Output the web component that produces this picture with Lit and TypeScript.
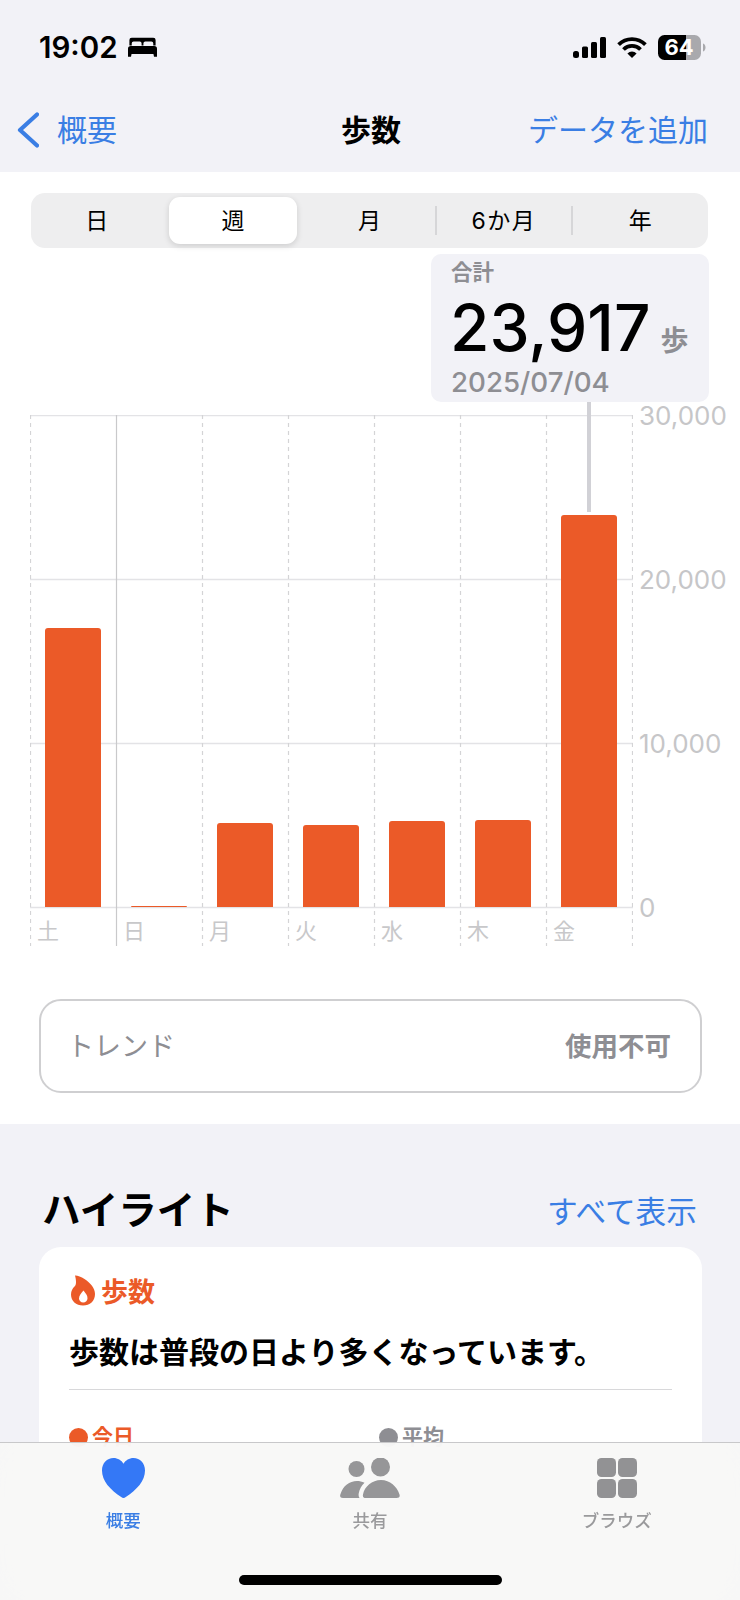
import { LitElement, html, css, svg } from 'lit';
import { customElement } from 'lit/decorators.js';

const MAX = 30000;
const PLOT_H = 492;
const COL_W = 86;

const days = [
  { label: '土', steps: 17000 },
  { label: '日', steps: 60 },
  { label: '月', steps: 5120 },
  { label: '火', steps: 5000 },
  { label: '水', steps: 5240 },
  { label: '木', steps: 5300 },
  { label: '金', steps: 23917 },
];

const ranges = ['日', '週', '月', '6か月', '年'];

@customElement('app-root')
export class AppRoot extends LitElement {
  static styles = css`
    :host {
      display: block;
      width: 740px;
      font-family: Inter, "Noto Sans CJK JP", sans-serif;
    }
    * { box-sizing: border-box; }
    .screen {
      position: relative;
      width: 740px;
      height: 1600px;
      overflow: hidden;
      background: #f2f2f7;
      color: #000;
    }
    .status {
      display: flex;
      align-items: center;
      height: 48px;
      margin-top: 23px;
      padding: 0 34px 0 39px;
    }
    .time {
      font-size: 29.5px;
      font-weight: 600;
      margin-right: 10px;
    }
    .status-right {
      margin-left: auto;
      display: flex;
      align-items: center;
      gap: 11px;
    }
    .nav {
      display: grid;
      grid-template-columns: 324px auto 1fr;
      align-items: center;
      height: 101px;
      padding: 17px 32px 0 17px;
      font-size: 30px;
      line-height: 40px;
    }
    .back {
      display: flex;
      align-items: center;
      gap: 18px;
      color: #3a7ee4;
    }
    .title { font-weight: 700; font-size: 30px; }
    .add { justify-self: end; color: #3a7ee4; }

    .sheet {
      position: relative;
      background: #fff;
      height: 952px;
      padding-top: 21px;
    }
    .segments {
      display: grid;
      grid-template-columns: repeat(5, 1fr);
      align-items: center;
      width: 677px;
      height: 55px;
      margin-left: 31px;
      padding: 4px 0;
      border-radius: 14px;
      background: #eeeeef;
      font-size: 23px;
    }
    .seg {
      position: relative;
      height: 47px;
      padding-bottom: 3px;
      display: flex;
      align-items: center;
      justify-content: center;
    }
    .seg.first { padding-right: 4px; }
    .seg.wide { letter-spacing: 1.5px; padding-right: 2px; }
    .seg.on {
      margin: 0 5px 0 3px;
      background: #fff;
      border-radius: 11px;
      box-shadow: 0 2px 6px rgba(0, 0, 0, 0.14);
    }
    .seg.sep::before {
      content: "";
      position: absolute;
      left: -2px;
      top: 9px;
      height: 29px;
      width: 2px;
      background: #d6d6d8;
    }

    .callout {
      position: absolute;
      left: 431px;
      top: 82px;
      width: 278px;
      height: 148px;
      padding: 5px 20px 0;
      border-radius: 10px;
      background: #f2f2f7;
    }
    .callout-label {
      font-size: 21.5px;
      line-height: 27px;
      font-weight: 600;
      color: #8e8e93;
    }
    .callout-value {
      display: flex;
      align-items: baseline;
      gap: 10px;
      height: 76px;
      margin: 4px 0 0 -1px;
      line-height: 76px;
      font-size: 64px;
      font-weight: 500;
    }
    .callout-unit {
      font-size: 28px;
      font-weight: 600;
      color: #8e8e93;
    }
    .callout-date {
      margin-top: -2px;
      font-size: 27.7px;
      line-height: 36px;
      font-weight: 500;
      color: #8e8e93;
    }
    .pointer {
      position: absolute;
      left: 587px;
      top: 230px;
      width: 4px;
      height: 110px;
      background: #d1d1d6;
    }

    .chart {
      display: flex;
      margin: 167px 0 0 30px;
    }
    .plot-wrap {
      position: relative;
      width: 603px;
    }
    .grid {
      position: absolute;
      left: 0;
      top: 0;
    }
    .plot, .days {
      position: relative;
      display: grid;
      grid-template-columns: repeat(7, 86px);
    }
    .plot { height: 492px; }
    .col {
      display: flex;
      align-items: flex-end;
      justify-content: center;
    }
    .bar {
      width: 55.5px;
      background: #eb5a28;
      border-radius: 3px 3px 0 0;
    }
    .days {
      height: 39px;
      padding-top: 12px;
      font-size: 22px;
      line-height: 24px;
      color: #c8c8ca;
    }
    .day { padding-left: 7px; }
    .yaxis {
      display: flex;
      flex-direction: column;
      justify-content: space-between;
      height: 492px;
      padding-left: 6px;
      font-size: 26px;
      color: #c6c6c8;
    }
    .tick {
      height: 0;
      display: flex;
      align-items: center;
    }

    .trend {
      display: flex;
      align-items: center;
      justify-content: space-between;
      width: 663px;
      height: 94px;
      margin: 53px 0 0 39px;
      padding: 0 29px 4px 26px;
      border: 2px solid #cfcfd1;
      border-radius: 22px;
      font-size: 27px;
      color: #8e8e93;
    }
    .trend b { font-weight: 600; font-size: 26.5px; }

    .highlights {
      display: flex;
      align-items: center;
      justify-content: space-between;
      padding: 0 43px 0 42px;
      height: 123px;
    }
    .highlights h2 {
      margin: 0;
      padding-top: 43px;
      font-size: 38.5px;
      font-weight: 700;
    }
    .highlights a {
      padding-top: 47px;
      font-size: 30.7px;
      color: #3a7ee4;
    }
    .card {
      width: 663px;
      height: 340px;
      margin-left: 39px;
      padding: 27px 30px 0;
      border-radius: 22px;
      background: #fff;
    }
    .card-head {
      display: flex;
      align-items: center;
      gap: 6px;
      height: 32px;
      padding-left: 2px;
      font-size: 27px;
      font-weight: 700;
      color: #eb5a28;
    }
    .card-text {
      margin: 0;
      padding: 24px 0 15px;
      font-size: 30px;
      line-height: 44px;
      font-weight: 600;
      border-bottom: 1px solid #d8d8da;
    }
    .legend {
      display: grid;
      grid-template-columns: 310px 1fr;
      padding-top: 34px;
      font-size: 21px;
      line-height: 26px;
      font-weight: 600;
    }
    .legend span {
      display: flex;
      align-items: center;
      gap: 4px;
    }
    .legend i {
      width: 19px;
      height: 19px;
      border-radius: 50%;
      background: currentColor;
    }
    .today { color: #eb5a28; }
    .avg { color: #8e8e93; }

    .tabbar {
      position: absolute;
      left: 0;
      right: 0;
      bottom: 0;
      height: 158px;
      display: grid;
      grid-template-columns: repeat(3, 1fr);
      align-items: start;
      padding-top: 15px;
      border-top: 1px solid #c8c8ca;
      background: rgba(248, 248, 246, 0.93);
      backdrop-filter: blur(24px);
    }
    .tab {
      display: flex;
      flex-direction: column;
      align-items: center;
      height: 74px;
      justify-content: space-between;
      font-size: 17.5px;
      line-height: 22px;
      font-weight: 500;
      color: #9a9a9c;
    }
    .tab.on { color: #3a7ee4; }
    .home {
      position: absolute;
      left: 239px;
      bottom: 15px;
      width: 263px;
      height: 10px;
      border-radius: 5px;
      background: #000;
    }
  `;

  private renderGrid() {
    const w = COL_W * 7 + 1;
    const xs = days.map((_, i) => i).concat(7);
    return html`<svg class="grid" width=${w} height="532" viewBox="0 0 ${w} 532">
      ${[0, 1, 2, 3].map((i) => svg`<line x1="0" x2=${w} y1=${i * 164 + 0.5} y2=${i * 164 + 0.5} stroke="#e3e3e6" stroke-width="1.5"></line>`)}
      ${xs.map((i) =>
        i === 1
          ? svg`<line x1=${i * COL_W + 0.5} x2=${i * COL_W + 0.5} y1="0" y2="531" stroke="#c9c9cb" stroke-width="1.2"></line>`
          : svg`<line x1=${i * COL_W + 0.5} x2=${i * COL_W + 0.5} y1="0" y2="531" stroke="#d4d4d6" stroke-width="1.2" stroke-dasharray="4 4"></line>`
      )}
    </svg>`;
  }

  render() {
    return html`
      <div class="screen">
        <div class="status">
          <span class="time">19:02</span>
          <svg width="29" height="20" viewBox="0 0 31 21" fill="#000">
            <path d="M4 0.500h23a2.500 2.500 0 0 1 2.500 2.500v6H27V6.500a2 2 0 0 0-2-2h-6.500a2 2 0 0 0-2 2V9h-2V6.500a2 2 0 0 0-2-2H6a2 2 0 0 0-2 2V9H1.500V3A2.500 2.500 0 0 1 4 .5z"/>
            <path d="M3 9.500h25a3 3 0 0 1 3 3V21h-3.200l-.6-3H3.800l-.6 3H0v-8.500a3 3 0 0 1 3-3z"/>
          </svg>
          <div class="status-right">
            <svg width="33" height="21" viewBox="0 0 33 21" fill="#000">
              <rect x="0" y="14" width="6" height="7" rx="2.500"/>
              <rect x="9" y="9.500" width="6" height="11.500" rx="1.500"/>
              <rect x="18" y="5" width="6" height="16" rx="1.500"/>
              <rect x="27" y="0" width="6" height="21" rx="1.500"/>
            </svg>
            <svg width="30" height="22" viewBox="0 0 30 22" fill="none" stroke="#000" stroke-width="3.800">
              <path d="M1.600 8.600a19 19 0 0 1 26.800 0"/>
              <path d="M6.500 13.500a12 12 0 0 1 17 0"/>
              <path d="M15 22l-4.600-4.600a6.500 6.500 0 0 1 9.200 0z" fill="#000" stroke="none"/>
            </svg>
            <svg width="48" height="25" viewBox="0 0 48 25">
              <defs>
                <clipPath id="batt"><rect x="0" y="0" width="43" height="25" rx="6.500"/></clipPath>
              </defs>
              <g clip-path="url(#batt)">
                <rect width="28" height="25" fill="#000"/>
                <rect x="28" width="15" height="25" fill="#a9a9ad"/>
              </g>
              <path d="M45 8.500c1.600.5 2.500 2 2.500 4s-.9 3.500-2.500 4z" fill="#a9a9ad"/>
              <text x="21" y="20" text-anchor="middle" font-size="22" font-weight="700" fill="#fff" font-family="Inter, sans-serif">64</text>
            </svg>
          </div>
        </div>
        <div class="nav">
          <div class="back">
            <svg width="22" height="36" viewBox="0 0 22 36" fill="none" stroke="#3a7ee4" stroke-width="4.200" stroke-linecap="round" stroke-linejoin="round">
              <path d="M20 2.500L3 18l17 15.500"/>
            </svg>
            <span>概要</span>
          </div>
          <div class="title">歩数</div>
          <div class="add">データを追加</div>
        </div>

        <div class="sheet">
          <div class="segments">
            ${ranges.map((r, i) => html`<div class="seg ${i === 0 ? 'first' : ''} ${i === 1 ? 'on' : ''} ${i > 2 ? 'sep' : ''} ${i === 3 ? 'wide' : ''}">${r}</div>`)}
          </div>
          <div class="chart">
            <div class="plot-wrap">
              ${this.renderGrid()}
              <div class="plot">
                ${days.map((d) => html`<div class="col"><div class="bar" style="height:${Math.max(1, Math.round((d.steps / MAX) * PLOT_H))}px"></div></div>`)}
              </div>
              <div class="days">
                ${days.map((d) => html`<div class="day">${d.label}</div>`)}
              </div>
            </div>
            <div class="yaxis">
              ${['30,000', '20,000', '10,000', '0'].map((t) => html`<div class="tick">${t}</div>`)}
            </div>
          </div>
          <div class="trend"><span>トレンド</span><b>使用不可</b></div>
          <div class="pointer"></div>
          <div class="callout">
            <div class="callout-label">合計</div>
            <div class="callout-value"><span>23,917</span><span class="callout-unit">歩</span></div>
            <div class="callout-date">2025/07/04</div>
          </div>
        </div>

        <div class="highlights">
          <h2>ハイライト</h2>
          <a>すべて表示</a>
        </div>
        <div class="card">
          <div class="card-head">
            <svg width="24" height="31" viewBox="0 0 24 30">
              <path fill="#eb5a28" fill-rule="evenodd" d="M4 0c2-.2 6 1 9.500 3.500C19.500 7.500 24 12.500 24 18.500 24 25.500 19 30 12 30S0 25.500 0 19c0-3.500 1.500-6 3.500-8 1-1 1.500-2 1.500-4.500C5 4 4.500 2 4 0zM12.500 15c-2 2.500-4.500 4.500-4.500 8 0 2.300 1.900 4 4.200 4 2.500 0 4.300-1.800 4.300-4.300 0-3-2-5-4-7.700z"/>
            </svg>
            <span>歩数</span>
          </div>
          <p class="card-text">歩数は普段の日より多くなっています。</p>
          <div class="legend">
            <span class="today"><i></i>今日</span>
            <span class="avg"><i></i>平均</span>
          </div>
        </div>

        <div class="tabbar">
          <div class="tab on">
            <svg width="43" height="40" viewBox="0 0 43 40" fill="#3478f6">
              <path d="M21.500 40c-.7 0-1.500-.4-2.300-1C8 31.500 0 23 0 12.500 0 5 5 0 11.500 0c4.300 0 7.900 2.200 10 5.800C23.600 2.200 27.200 0 31.500 0 38 0 43 5 43 12.500 43 23 35 31.500 23.800 39c-.8.600-1.600 1-2.300 1z"/>
            </svg>
            <span>概要</span>
          </div>
          <div class="tab">
            <svg width="60" height="40" viewBox="0 0 60 40" fill="#969698">
              <circle cx="16.500" cy="11" r="8"/>
              <path d="M3 40c-2.500 0-3.500-1.500-2.500-4C3 28 9.500 23 17 23c2.500 0 5 .5 7.500 1.700-3 2.800-5 6.300-5.700 10.300-.4 2-.3 3.500.7 5z"/>
              <circle cx="40.500" cy="9" r="9.500"/>
              <path d="M26 40c-2.500 0-3.500-1-3-3.500C24.500 28.500 32 22 41 22s16 6.500 18.500 14.500c.7 2.500-.5 3.500-3 3.500z"/>
            </svg>
            <span>共有</span>
          </div>
          <div class="tab">
            <svg width="40" height="40" viewBox="0 0 40 40" fill="#929294">
              <rect x="0" y="0" width="19" height="19" rx="4.500"/>
              <rect x="21" y="0" width="19" height="19" rx="4.500"/>
              <rect x="0" y="21" width="19" height="19" rx="4.500"/>
              <rect x="21" y="21" width="19" height="19" rx="4.500"/>
            </svg>
            <span>ブラウズ</span>
          </div>
        </div>
        <div class="home"></div>
      </div>
    `;
  }
}
